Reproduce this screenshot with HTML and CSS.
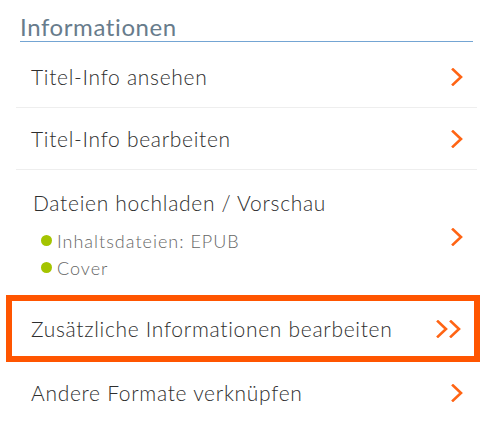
FILE: index.html
```html
<!DOCTYPE html>
<html lang="de">
<head>
<meta charset="utf-8">
<title>Informationen</title>
<link rel="stylesheet" href="styles.css">
</head>
<body>
<div class="panel">
  <h2 class="heading">Informationen</h2>
  <ul class="menu">
    <li class="row">
      <span class="label">Titel-Info ansehen</span>
      <svg class="chev" width="12" height="18" viewBox="0 0 12 18"><polyline points="2,1.5 10,9 2,16.5"/></svg>
    </li>
    <li class="row">
      <span class="label">Titel-Info bearbeiten</span>
      <svg class="chev" width="12" height="18" viewBox="0 0 12 18"><polyline points="2,1.5 10,9 2,16.5"/></svg>
    </li>
    <li class="row row-files">
      <div class="files">
        <span class="label label-files">Dateien hochladen / Vorschau</span>
        <ul class="status">
          <li class="status-item"><span class="dot"></span>Inhaltsdateien: EPUB</li>
          <li class="status-item"><span class="dot"></span>Cover</li>
        </ul>
      </div>
      <svg class="chev" width="12" height="18" viewBox="0 0 12 18"><polyline points="2,1.5 10,9 2,16.5"/></svg>
    </li>
    <li class="row row-active">
      <span class="label">Zusätzliche Informationen bearbeiten</span>
      <svg class="chev chev-double" width="26" height="18" viewBox="0 0 26 18"><polyline points="2,1.5 10,9 2,16.5"/><polyline points="15,1.5 23,9 15,16.5"/></svg>
    </li>
    <li class="row row-last">
      <span class="label">Andere Formate verknüpfen</span>
      <svg class="chev" width="12" height="18" viewBox="0 0 12 18"><polyline points="2,1.5 10,9 2,16.5"/></svg>
    </li>
  </ul>
</div>
</body>
</html>
```
FILE: styles.css
```css
html, body {
  margin: 0;
  padding: 0;
  background: #ffffff;
}
body {
  font-family: Lato, "Open Sans", "Liberation Sans", sans-serif;
  font-weight: 300;
  color: #333333;
  width: 495px;
  height: 424px;
  overflow: hidden;
}
.panel {
  padding: 0 18px 0 16px;
}
.heading {
  margin: 0 4px;
  padding-top: 12px;
  height: 29px;
  font-size: 24px;
  font-weight: 400;
  letter-spacing: 0.6px;
  line-height: 30px;
  color: #687c8c;
  border-bottom: 1px solid #74a5d3;
  margin-bottom: 4px;
}
.menu {
  list-style: none;
  margin: 0;
  padding: 0;
}
.row {
  display: flex;
  align-items: center;
  justify-content: space-between;
  height: 61px;
  padding: 0 14px 0 15px;
  border-bottom: 1px solid #eeeeee;
}
.label {
  font-size: 21px;
  letter-spacing: 0.7px;
  color: #2e2e2e;
}
.chev {
  fill: none;
  stroke: #ff6414;
  stroke-width: 2.6;
  stroke-linecap: square;
  flex: none;
}
.row-files {
  height: 125px;
  align-items: stretch;
}
.files {
  display: flex;
  flex-direction: column;
  padding-top: 20px;
}
.label-files {
  padding-left: 2px;
}
.row-files .chev {
  align-self: center;
  margin-top: 8px;
}
.status {
  list-style: none;
  margin: 12px 0 0 10px;
  padding: 0;
}
.status-item {
  display: flex;
  align-items: center;
  gap: 5px;
  height: 27px;
  font-size: 18px;
  letter-spacing: 1px;
  color: #666666;
}
.dot {
  width: 11px;
  height: 11px;
  border-radius: 50%;
  background: #a4c400;
  flex: none;
}
.row-active {
  height: 55px;
  margin: -1px -3px 0 -10px;
  border: 6px solid #ff5500;
  padding: 0 12px 0 19px;
}
.row-last {
  border-bottom: none;
}
```
